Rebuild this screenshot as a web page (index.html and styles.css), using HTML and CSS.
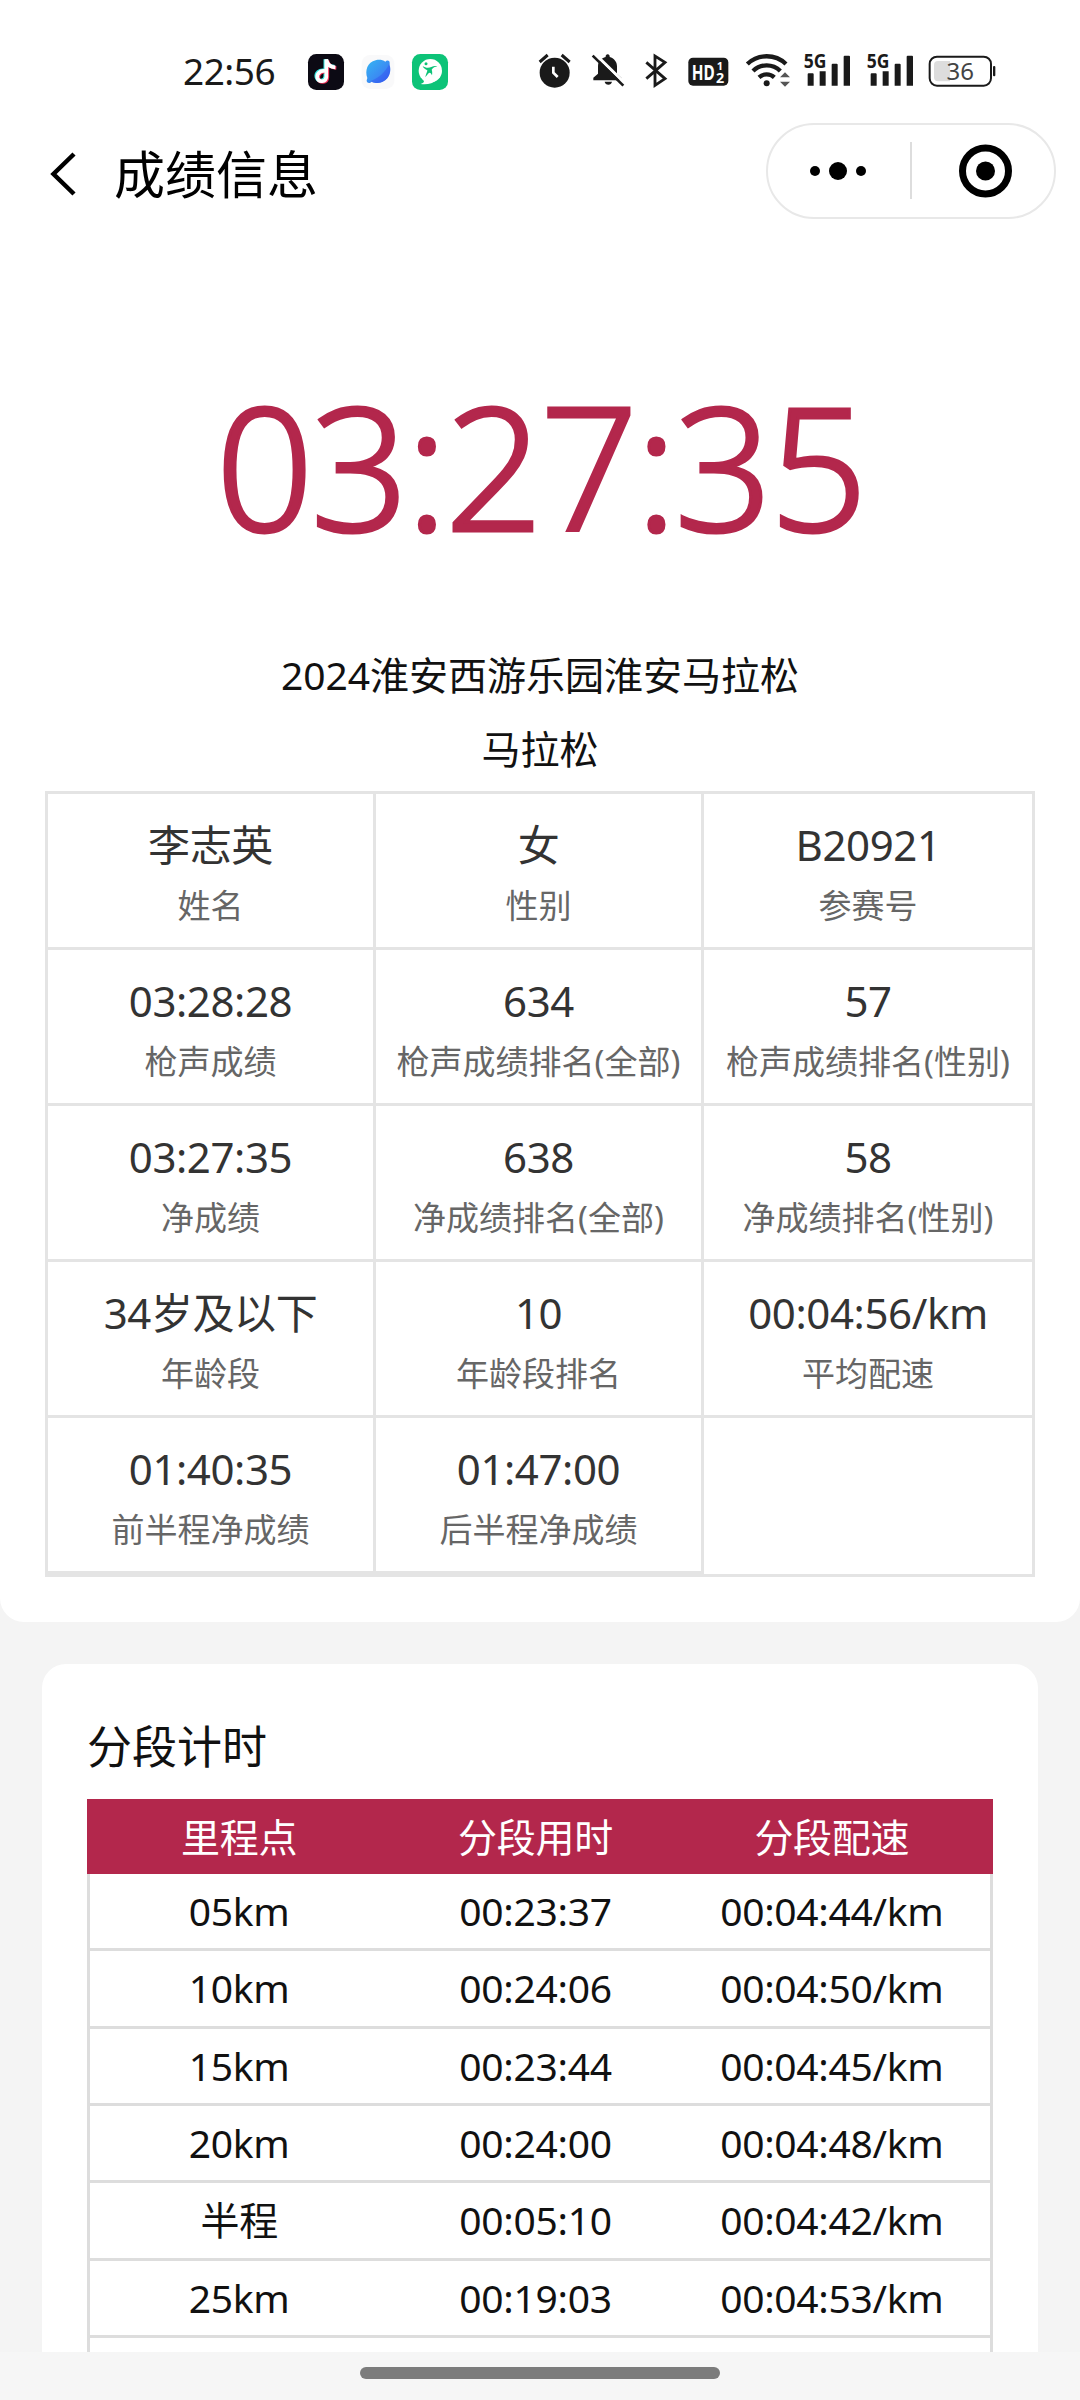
FILE: index.html
```html
<!DOCTYPE html>
<html lang="zh-CN">
<head>
  <meta charset="UTF-8" />
  <meta name="viewport" content="width=device-width, initial-scale=1.0"/>
  <title>成绩信息</title>
  <link rel="stylesheet" href="styles.css">
</head>
<body>

  <div class="page">

    <!-- STATUS BAR -->
    <div class="status-bar">
      <span class="clock">22:56</span>
      <div class="app-icons">
        <svg width="36" height="36" viewBox="0 0 108 108">
          <rect width="108" height="108" rx="25" fill="#0c0a14"/>
          <g fill="none" stroke-width="11">
            <path d="M47 49C34 47 23 57 25 69C28 84 51 83 52 67V16C55 31 65 37 79 38" stroke="#35e6e2"/>
            <path d="M53 53C40 51 29 61 31 73C34 88 57 87 58 71V20C61 35 71 41 85 42" stroke="#f7335c"/>
            <path d="M50 51C37 49 26 59 28 71C31 86 54 85 55 69V16C58 33 68 39 82 40" stroke="#fff"/>
          </g>
        </svg>
        <svg width="36" height="36" viewBox="0 0 108 108">
          <defs>
            <linearGradient id="planet" x1="0" y1="0" x2="1" y2="1">
              <stop offset="0" stop-color="#35b6f2"/>
              <stop offset="0.6" stop-color="#3b8af3"/>
              <stop offset="1" stop-color="#3350ee"/>
            </linearGradient>
          </defs>
          <rect x="5" y="3" width="98" height="102" rx="25" fill="#f9f9fa"/>
          <path d="M22 72C14 50 22 25 47 19C58 16 68 18 76 23C80 17 89 18 89 26V34C93 46 91 62 82 73C70 88 50 91 35 83C29 90 19 87 20 79Z" fill="url(#planet)"/>
          <path d="M30 82C55 73 77 55 87 30C95 50 88 72 70 82C57 89 44 88 35 83Z" fill="#355df0" opacity="0.55"/>
        </svg>
        <svg width="36" height="36" viewBox="0 0 108 108">
          <rect width="108" height="108" rx="25" fill="#0dc378"/>
          <circle cx="55" cy="50" r="35" fill="#fff"/>
          <path d="M30 74C40 82 36 86 26 90C44 93 63 89 74 77Z" fill="#fff"/>
          <circle cx="42" cy="29" r="4.500" fill="#0dc378"/>
          <path d="M32 36C40 42 50 43 58 39C64 36 70 35 76 37C69 38 63 41 59 47C61 52 61 58 60 64C58 58 55 56 52 56C48 59 44 64 40 70C41 61 46 54 46 49C40 46 34 42 32 36Z" fill="#0dc378"/>
        </svg>
      </div>

      <svg class="ic ic-alarm" width="35" height="35" viewBox="0 0 105 105">
        <circle cx="53" cy="59" r="45" fill="#1a1a1a"/>
        <path d="M8 27L32 6M74 6L98 27" stroke="#1a1a1a" stroke-width="9"/>
        <path d="M49 41V59L62 72" stroke="#fff" stroke-width="8" fill="none"/>
      </svg>
      <svg class="ic ic-bell" width="35" height="35" viewBox="0 0 105 105">
        <path d="M10 82V74L24 62V40C24 24 34 15 47 12V8Q53 0 59 8V12C72 16 81 26 81 40V62L94 74V82Z" fill="#1a1a1a"/>
        <path d="M44 86H66Q64 95 55 95Q46 95 44 86Z" fill="#1a1a1a"/>
        <path d="M14 2L105 91" stroke="#fff" stroke-width="9"/>
        <path d="M8 8L100 98" stroke="#1a1a1a" stroke-width="8"/>
      </svg>
      <svg class="ic ic-bt" width="25" height="35" viewBox="0 0 75 105">
        <path d="M10 28L66 77L36 97V9L66 28L10 77" stroke="#1a1a1a" stroke-width="8.500" fill="none"/>
      </svg>
      <svg class="ic ic-hd" width="43" height="35" viewBox="0 0 129 105">
        <rect x="4" y="14" width="120" height="84" rx="14" fill="#1a1a1a"/>
        <g fill="#fff" font-weight="700">
          <text x="14" y="81" font-size="64" textLength="69" lengthAdjust="spacingAndGlyphs">HD</text>
          <text x="89" y="50" font-size="33">1</text>
          <text x="87" y="90" font-size="43">2</text>
        </g>
      </svg>
      <svg class="ic ic-wifi" width="47" height="35" viewBox="0 0 141 105">
        <g fill="none" stroke="#1a1a1a" stroke-width="13">
          <path d="M7 33A84 84 0 0 1 123 33"/>
          <path d="M24 54A58 58 0 0 1 106 54"/>
          <path d="M42 73A34 34 0 0 1 88 73"/>
        </g>
        <circle cx="65" cy="91" r="9" fill="#1a1a1a"/>
        <path d="M105 73L120 58L135 73ZM105 86H135L120 101Z" fill="#555"/>
      </svg>
      <svg class="ic ic-net" width="49" height="35" viewBox="0 0 147 105">
        <text x="2" y="46" font-size="58" font-weight="700" fill="#1a1a1a" textLength="68" lengthAdjust="spacingAndGlyphs">5G</text>
        <path d="M14 64q0-3 3-3h12q3 0 3 3v34h-18zM50 55h18v43h-18zM86 35q0-3 3-3h12q3 0 3 3v63h-18zM122 11q0-3 3-3h13q3 0 3 3v87h-19z" fill="#1a1a1a"/>
      </svg>
      <svg class="ic ic-net2" width="49" height="35" viewBox="0 0 147 105">
        <text x="2" y="46" font-size="58" font-weight="700" fill="#1a1a1a" textLength="68" lengthAdjust="spacingAndGlyphs">5G</text>
        <path d="M14 64q0-3 3-3h12q3 0 3 3v34h-18zM50 55h18v43h-18zM86 35q0-3 3-3h12q3 0 3 3v63h-18zM122 11q0-3 3-3h13q3 0 3 3v87h-19z" fill="#1a1a1a"/>
      </svg>
      <svg class="ic ic-battery" width="69" height="35" viewBox="0 0 207 105">
        <rect x="5" y="11" width="184" height="87" rx="22" fill="#fff" stroke="#1a1a1a" stroke-width="6"/>
        <path d="M66 24V85H30Q18 85 18 73V36Q18 24 30 24Z" fill="#ddd"/>
        <rect x="195" y="39" width="7" height="31" rx="3" fill="#1a1a1a"/>
        <text x="97" y="81" font-size="72" text-anchor="middle" fill="#444">36</text>
      </svg>
    </div>

    <!-- NAV BAR -->
    <div class="nav-bar">
      <svg class="back" width="28" height="44" viewBox="0 0 28 44">
        <path d="M24 2L3.500 22L24 42" stroke="#000" stroke-width="4.500" fill="none"/>
      </svg>
      <h1>成绩信息</h1>
      <div class="capsule">
        <svg width="286" height="92" viewBox="0 0 286 92">
          <circle cx="47" cy="46" r="5"/>
          <circle cx="70" cy="46" r="9"/>
          <circle cx="93" cy="46" r="5"/>
          <path d="M143 17V74" stroke="#ddd" stroke-width="2"/>
          <circle cx="217.500" cy="46" r="23" fill="none" stroke="#000" stroke-width="7"/>
          <circle cx="217.500" cy="46" r="9.500"/>
        </svg>
      </div>
    </div>

    <!-- RESULT -->
    <div class="result">
      <div class="big-time">03:27:35</div>
      <div class="event">2024淮安西游乐园淮安马拉松</div>
      <div class="event">马拉松</div>
      <div class="info">
        <div class="cell"><b>李志英</b><span>姓名</span></div>
        <div class="cell"><b>女</b><span>性别</span></div>
        <div class="cell"><b>B20921</b><span>参赛号</span></div>
        <div class="cell"><b>03:28:28</b><span>枪声成绩</span></div>
        <div class="cell"><b>634</b><span>枪声成绩排名(全部)</span></div>
        <div class="cell"><b>57</b><span>枪声成绩排名(性别)</span></div>
        <div class="cell"><b>03:27:35</b><span>净成绩</span></div>
        <div class="cell"><b>638</b><span>净成绩排名(全部)</span></div>
        <div class="cell"><b>58</b><span>净成绩排名(性别)</span></div>
        <div class="cell"><b>34岁及以下</b><span>年龄段</span></div>
        <div class="cell"><b>10</b><span>年龄段排名</span></div>
        <div class="cell"><b>00:04:56/km</b><span>平均配速</span></div>
        <div class="cell"><b>01:40:35</b><span>前半程净成绩</span></div>
        <div class="cell"><b>01:47:00</b><span>后半程净成绩</span></div>
      </div>
    </div>

    <!-- SPLITS -->
    <div class="splits">
      <h2>分段计时</h2>
      <div class="row head"><span>里程点</span><span>分段用时</span><span>分段配速</span></div>
      <div class="rows">
        <div class="row"><span>05km</span><span>00:23:37</span><span>00:04:44/km</span></div>
        <div class="row"><span>10km</span><span>00:24:06</span><span>00:04:50/km</span></div>
        <div class="row"><span>15km</span><span>00:23:44</span><span>00:04:45/km</span></div>
        <div class="row"><span>20km</span><span>00:24:00</span><span>00:04:48/km</span></div>
        <div class="row"><span>半程</span><span>00:05:10</span><span>00:04:42/km</span></div>
        <div class="row"><span>25km</span><span>00:19:03</span><span>00:04:53/km</span></div>
      </div>
    </div>

    <div class="home-bar"><i></i></div>
  </div>

</body>
</html>
```
FILE: styles.css
```css
* { margin: 0; padding: 0; box-sizing: border-box; }
body {
  font-family: "Noto Sans", "Noto Sans CJK SC", sans-serif;
  background: #f4f4f4;
  color: #111;
}
.page {
  width: 1080px;
  height: 2400px;
  overflow: hidden;
  display: flex;
  flex-direction: column;
}
svg {
  display: block;
  flex: none;
  overflow: visible;
}

/* status bar */
.status-bar {
  height: 120px;
  padding: 53px 0 0 183px;
  background: #fff;
  display: flex;
  align-items: flex-start;
}
.clock {
  width: 125px;
  font-size: 37px;
  line-height: 36px;
  letter-spacing: -0.5px;
  color: #1a1a1a;
}
.app-icons {
  display: flex;
  gap: 16px;
  padding-top: 1px;
}
.ic-alarm { margin-left: 89px; }
.ic-bell { margin-left: 18px; }
.ic-bt { margin-left: 18px; }
.ic-hd { margin-left: 19px; }
.ic-wifi { margin-left: 15px; }
.ic-net { margin-left: 11px; }
.ic-net2 { margin-left: 14px; }
.ic-battery { margin-left: 13px; }

/* nav bar */
.nav-bar {
  height: 102px;
  padding: 3px 24px 0 50px;
  background: #fff;
  display: flex;
  align-items: flex-start;
}
.back {
  margin-top: 29px;
}
.nav-bar h1 {
  flex: 1;
  margin-left: 36px;
  font-size: 51px;
  font-weight: 400;
  line-height: 103px;
  color: #000;
}
.capsule {
  width: 290px;
  height: 96px;
  border: 2px solid #e8e8e8;
  border-radius: 48px;
}

/* result */
.result {
  height: 1400px;
  flex: none;
  padding: 117px 45px 0;
  background: #fff;
  border-radius: 0 0 24px 24px;
  text-align: center;
}
.big-time {
  height: 299px;
  font-size: 172px;
  font-weight: 300;
  line-height: 250px;
  letter-spacing: -3px;
  color: #b3274c;
  -webkit-text-stroke: 3px #b3274c;
}
.event {
  font-size: 39px;
  line-height: 74px;
}
.info {
  height: 786px;
  margin-top: 5px;
  border: 3px solid #e4e4e4;
  display: grid;
  grid-template-columns: repeat(3, 328px);
  grid-auto-rows: 156px;
}
.cell {
  padding-top: 21px;
  border-right: 3px solid #e4e4e4;
  border-bottom: 3px solid #e4e4e4;
  white-space: nowrap;
}
.cell:nth-child(3n) {
  border-right: none;
}
.cell b, .cell span {
  display: block;
  line-height: 60px;
}
.cell b {
  height: 61px;
  font-size: 42px;
  font-weight: 400;
  letter-spacing: -0.4px;
  color: #333;
}
.cell span {
  font-size: 33px;
  color: #666;
}

/* splits */
.splits {
  flex: 1;
  min-height: 0;
  overflow: hidden;
  margin: 42px 42px 0;
  padding: 43px 45px 0;
  background: #fff;
  border-radius: 24px 24px 0 0;
}
.splits h2 {
  height: 92px;
  font-size: 45px;
  font-weight: 400;
  line-height: 80px;
}
.row {
  height: 77.33px;
  padding: 0 10px 0 1px;
  border-bottom: 3px solid #ddd;
  display: grid;
  grid-template-columns: repeat(3, 1fr);
  align-items: center;
  text-align: center;
  font-size: 39px;
  line-height: 74px;
  letter-spacing: -0.3px;
}
.head {
  height: 75px;
  padding: 0 13px 0 4px;
  border: none;
  background: #b3274c;
  color: #fff;
}
.rows {
  height: 600px;
  border-left: 3px solid #ddd;
  border-right: 3px solid #ddd;
}

/* bottom gesture bar */
.home-bar {
  height: 48px;
  flex: none;
  padding-top: 15px;
  background: #f6f6f6;
}
.home-bar i {
  display: block;
  width: 360px;
  height: 12px;
  margin: 0 auto;
  border-radius: 6px;
  background: #7c7c7c;
}
```
